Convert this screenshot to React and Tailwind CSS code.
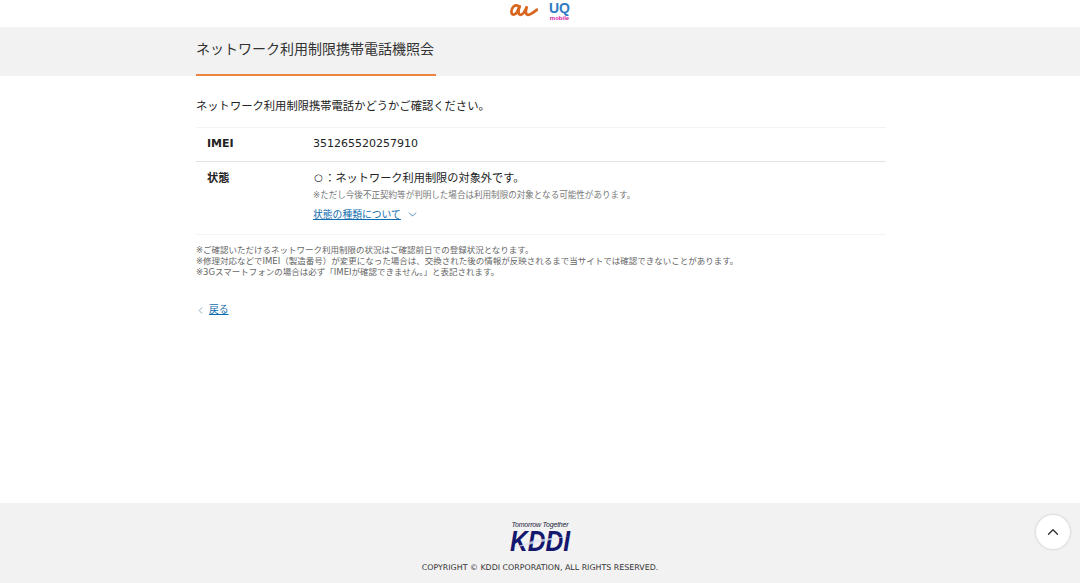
import { ChevronDown, ChevronLeft, ChevronUp } from 'lucide-react'

const FONT = "font-['DejaVu_Sans','Noto_Sans_CJK_JP',sans-serif]"

// au mark, drawn by hand
function AuLogo() {
  return (
    <svg width="28" height="14" viewBox="0 0 28 14" fill="none" stroke="#d9661f" strokeLinecap="round" aria-label="au" className="mt-[3px]">
      <path d="M8.5 3.2C5 0.8 1.4 4.6 1.4 8.6C1.4 12.4 4.6 12.6 7 9.4L9.6 3.4" strokeWidth="2.7" />
      <path d="M9.6 3.4C8.4 6.6 7.6 11.8 10.6 11.8C13 11.8 15.4 7.2 17 3.2C15.8 6.8 15 11.8 17.8 11.8C20.6 11.8 23.4 9.4 27 6.6" strokeWidth="2.7" />
    </svg>
  )
}

function UqLogo() {
  return (
    <div className="flex flex-col items-center pt-px leading-none">
      <span className="font-['Liberation_Sans',sans-serif] text-[14px] leading-[14px] font-bold text-[#2e7bc4]">UQ</span>
      <span className="font-['Liberation_Sans',sans-serif] text-[6px] leading-[7px] font-bold text-[#d6249f]">mobile</span>
    </div>
  )
}

function KddiLogo() {
  return (
    <div className="flex flex-col items-center">
      <span className="font-['Liberation_Sans',sans-serif] text-[7px] leading-[9px] italic tracking-[-0.2px] text-[#1a1a40]">Tomorrow Together</span>
      <svg width="62" height="23" viewBox="0 0 62 23" className="overflow-visible">
        <text
          x="1"
          y="22"
          fontFamily="Liberation Sans, sans-serif"
          fontSize="30"
          fontWeight="900"
          fontStyle="italic"
          fill="#14176e"
          textLength="60"
          lengthAdjust="spacingAndGlyphs"
        >
          KDDI
        </text>
        <path d="M4 19 L26 11 L60 7 L28 14 Z" fill="#dfe3f2" opacity="0.75" />
      </svg>
    </div>
  )
}

export default function App() {
  return (
    <div className={`flex min-h-screen flex-col bg-white text-[#222] ${FONT}`}>
      {/* Header */}
      <header className="flex h-[27px] items-start justify-center gap-[11px]">
        <AuLogo />
        <UqLogo />
      </header>

      <div className="h-[49px] bg-[#f2f2f2]">
        <div className="mx-auto flex h-full w-[692px] flex-col pl-[2px]">
          <h1 className="flex-1 pt-[13px] text-[14px] leading-[19px] font-normal text-[#333]">
            ネットワーク利用制限携帯電話機照会
          </h1>
          <div className="h-[2px] w-[240px] bg-[#ea8443]" />
        </div>
      </div>

      <main className="flex-1">
        <div className="mx-auto w-[692px] pt-[23px] pl-[2px]">
          <p className="text-[11.3px] leading-[16px]">ネットワーク利用制限携帯電話かどうかご確認ください。</p>

          <div className="mt-[12px] border-y border-[#f3f3f3]">
            <div className="flex h-[34px] items-center border-b border-[#e3e3e3] pl-[11px]">
              <div className="w-[106px] text-[11px] font-bold">IMEI</div>
              <div className="text-[11px]">351265520257910</div>
            </div>
            <div className="flex h-[72px] pt-[9px] pl-[11px]">
              <div className="w-[106px] text-[11.2px] leading-[16px] font-bold">状態</div>
              <div>
                <p className="text-[11.2px] leading-[16px]">
                  <span className="inline-block w-[11.2px] -translate-y-px text-center text-[10px] leading-[16px]">○</span>：ネットワーク利用制限の対象外です。
                </p>
                <p className="mt-[2px] text-[8.55px] leading-[12px] text-[#777]">
                  ※ただし今後不正契約等が判明した場合は利用制限の対象となる可能性があります。
                </p>
                <a className="mt-[6px] flex items-center gap-[5px] text-[#0f6cae]">
                  <span className="text-[9.8px] leading-[15px] underline">状態の種類について</span>
                  <ChevronDown size={13} strokeWidth={1.5} className="text-[#2f74a8]" />
                </a>
              </div>
            </div>
          </div>

          <div className="mt-[10px] text-[8.5px] leading-[11px] text-[#666]">
            <p>※ご確認いただけるネットワーク利用制限の状況はご確認前日での登録状況となります。</p>
            <p>※修理対応などでIMEI（製造番号）が変更になった場合は、交換された後の情報が反映されるまで当サイトでは確認できないことがあります。</p>
            <p>※3Gスマートフォンの場合は必ず「IMEIが確認できません。」と表記されます。</p>
          </div>

          <a className="mt-[25px] flex items-center gap-[3px] text-[#0f6cae]">
            <ChevronLeft size={11} strokeWidth={1.4} className="-ml-px text-[#4d7f9f]" />
            <span className="text-[9.8px] leading-[14px] underline">戻る</span>
          </a>
        </div>
      </main>

      {/* Footer */}
      <footer className="relative flex h-[80px] flex-col items-center bg-[#f2f2f2] pt-[17px]">
        <KddiLogo />
        <p className="mt-[10px] text-[7.9px] leading-[12px] text-[#333]">COPYRIGHT © KDDI CORPORATION, ALL RIGHTS RESERVED.</p>
        <button
          type="button"
          className="absolute top-[12px] right-[10px] flex size-[34px] items-center justify-center rounded-full bg-white shadow-[0_0_3px_rgba(0,0,0,0.2)]"
        >
          <ChevronUp size={18} strokeWidth={1.8} className="text-[#333]" />
        </button>
      </footer>
    </div>
  )
}
